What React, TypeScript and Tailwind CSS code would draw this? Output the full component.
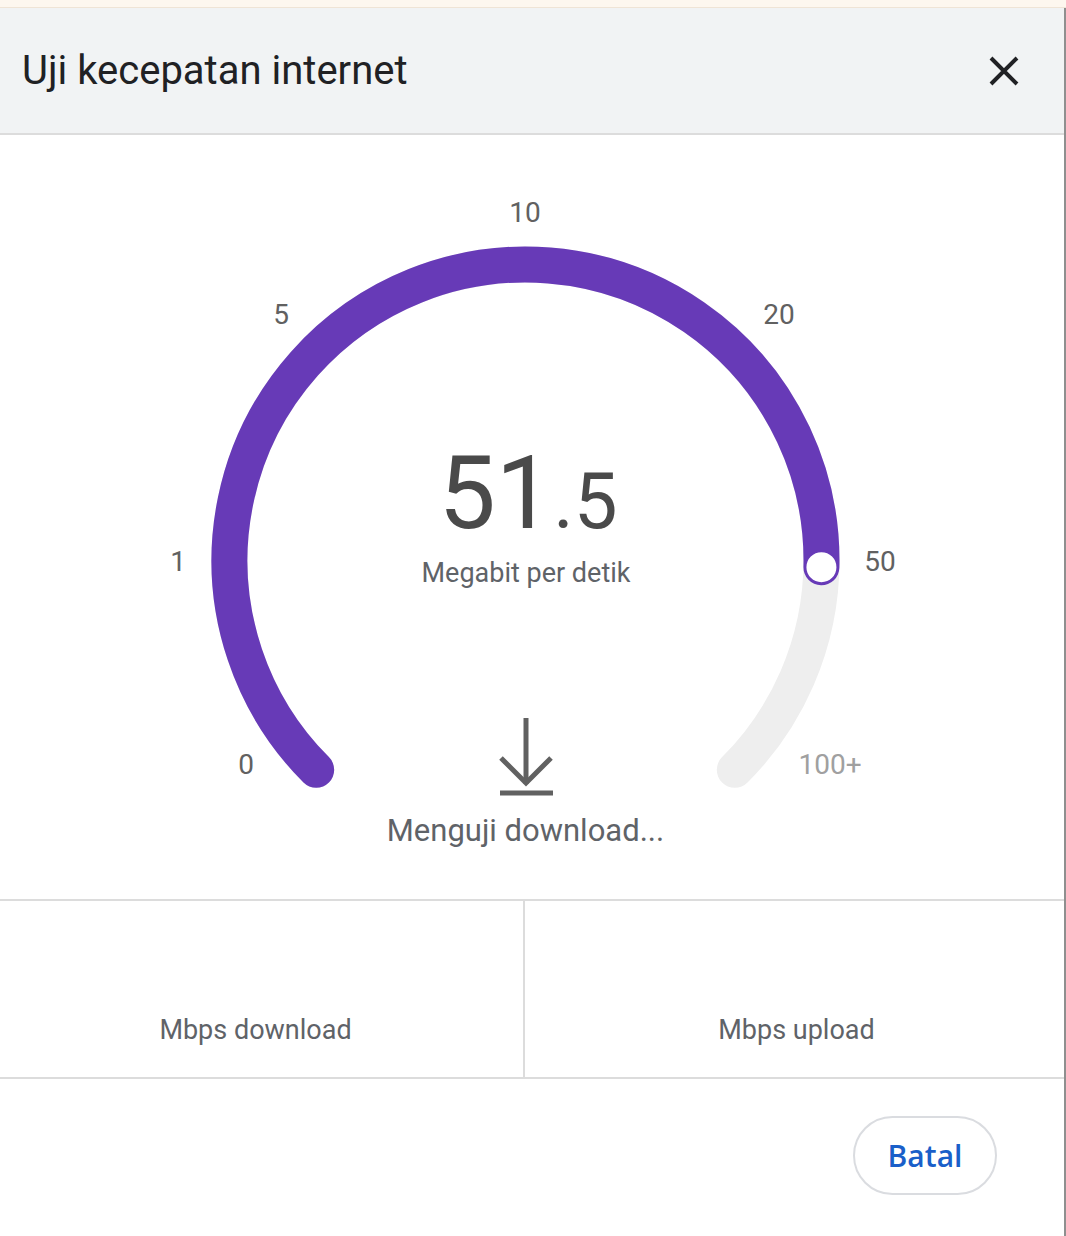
const CX = 525.5;
const CY = 560.5;
const R = 296;

const pt = (deg: number) => {
  const a = (deg * Math.PI) / 180;
  return [CX + R * Math.sin(a), CY - R * Math.cos(a)];
};

const arc = (from: number, to: number) => {
  const [x1, y1] = pt(from);
  const [x2, y2] = pt(to);
  const large = to - from > 180 ? 1 : 0;
  return `M ${x1} ${y1} A ${R} ${R} 0 ${large} 1 ${x2} ${y2}`;
};

const labels = [
  { t: "0", x: 246, y: 774 },
  { t: "1", x: 178, y: 571 },
  { t: "5", x: 281, y: 324 },
  { t: "10", x: 525, y: 222 },
  { t: "20", x: 779, y: 324 },
  { t: "50", x: 880, y: 571 },
];

const Gauge = () => {
  const knob = pt(91.3);
  return (
    <svg width={1064} height={668} viewBox="0 135 1064 668" className="block">
      <path d={arc(-135, 135)} stroke="#eeeeee" strokeWidth={36} fill="none" strokeLinecap="round" />
      <path d={arc(-135, 91.3)} stroke="#673ab7" strokeWidth={36} fill="none" strokeLinecap="round" />
      <circle cx={knob[0]} cy={knob[1]} r={16} fill="#fff" stroke="#673ab7" strokeWidth={2} />
      <g fontFamily="Roboto, sans-serif" fontSize={28} textAnchor="middle">
        {labels.map((l) => (
          <text key={l.t} x={l.x} y={l.y} fill="#616161">
            {l.t}
          </text>
        ))}
        <text x={830} y={774} fill="#a0a0a0">
          100+
        </text>
      </g>
      <text x={528} y={528} textAnchor="middle" fontFamily="Roboto, sans-serif" fill="#4a4a4a">
        <tspan fontSize={102}>51</tspan>
        <tspan fontSize={78}>.5</tspan>
      </text>
      <text x={526} y={582} textAnchor="middle" fontFamily="Roboto, sans-serif" fontSize={27} fill="#5f6368">
        Megabit per detik
      </text>
      <g stroke="#616161" strokeWidth={5} fill="none">
        <path d="M526 718 V784" />
        <path d="M501 758 L526 783 L551 758" />
        <path d="M500 793 H553" />
      </g>
    </svg>
  );
};

export default function App() {
  return (
    <div className="w-[1066px] h-[1236px] bg-white flex flex-col font-['Roboto',sans-serif] overflow-hidden">
      <div className="h-[8px] bg-[#fdf7ef] border-b border-[#efe4d6] shrink-0" />
      <div className="flex-1 flex flex-col w-[1066px] border-r-2 border-[#8f8f8f]">
        <div className="h-[127px] bg-[#f1f3f4] border-b-2 border-[#dcdcdc] flex items-center justify-between pl-[22px] pr-[44px]">
          <h1 className="text-[40px] text-[#202124] leading-none">Uji kecepatan internet</h1>
          <svg width="32" height="32" viewBox="0 0 32 32">
            <path d="M3 3 L29 29 M29 3 L3 29" stroke="#202124" strokeWidth={4} />
          </svg>
        </div>
        <div className="flex flex-col">
          <Gauge />
          <p className="mt-[10px] w-[1051px] text-center text-[31px] leading-[36px] text-[#5f6368]">
            Menguji download...
          </p>
          <div className="h-[50px]" />
        </div>
        <div className="grid grid-cols-[525px_1fr] h-[180px] border-y-2 border-[#dcdcdc]">
          <div className="border-r-2 border-[#dcdcdc] flex items-end justify-center pb-[31px] pr-[12px]">
            <span className="text-[27px] leading-[32px] text-[#5f6368]">Mbps download</span>
          </div>
          <div className="flex items-end justify-center pb-[31px] pl-[4px]">
            <span className="text-[27px] leading-[32px] text-[#5f6368]">Mbps upload</span>
          </div>
        </div>
        <div className="flex justify-end pt-[37px] pr-[67px]">
          <button className="w-[144px] h-[79px] rounded-full border-2 border-[#dadce0] text-[30px] font-semibold text-[#1a5fc9] font-['Open_Sans',sans-serif]">
            Batal
          </button>
        </div>
      </div>
    </div>
  );
}
